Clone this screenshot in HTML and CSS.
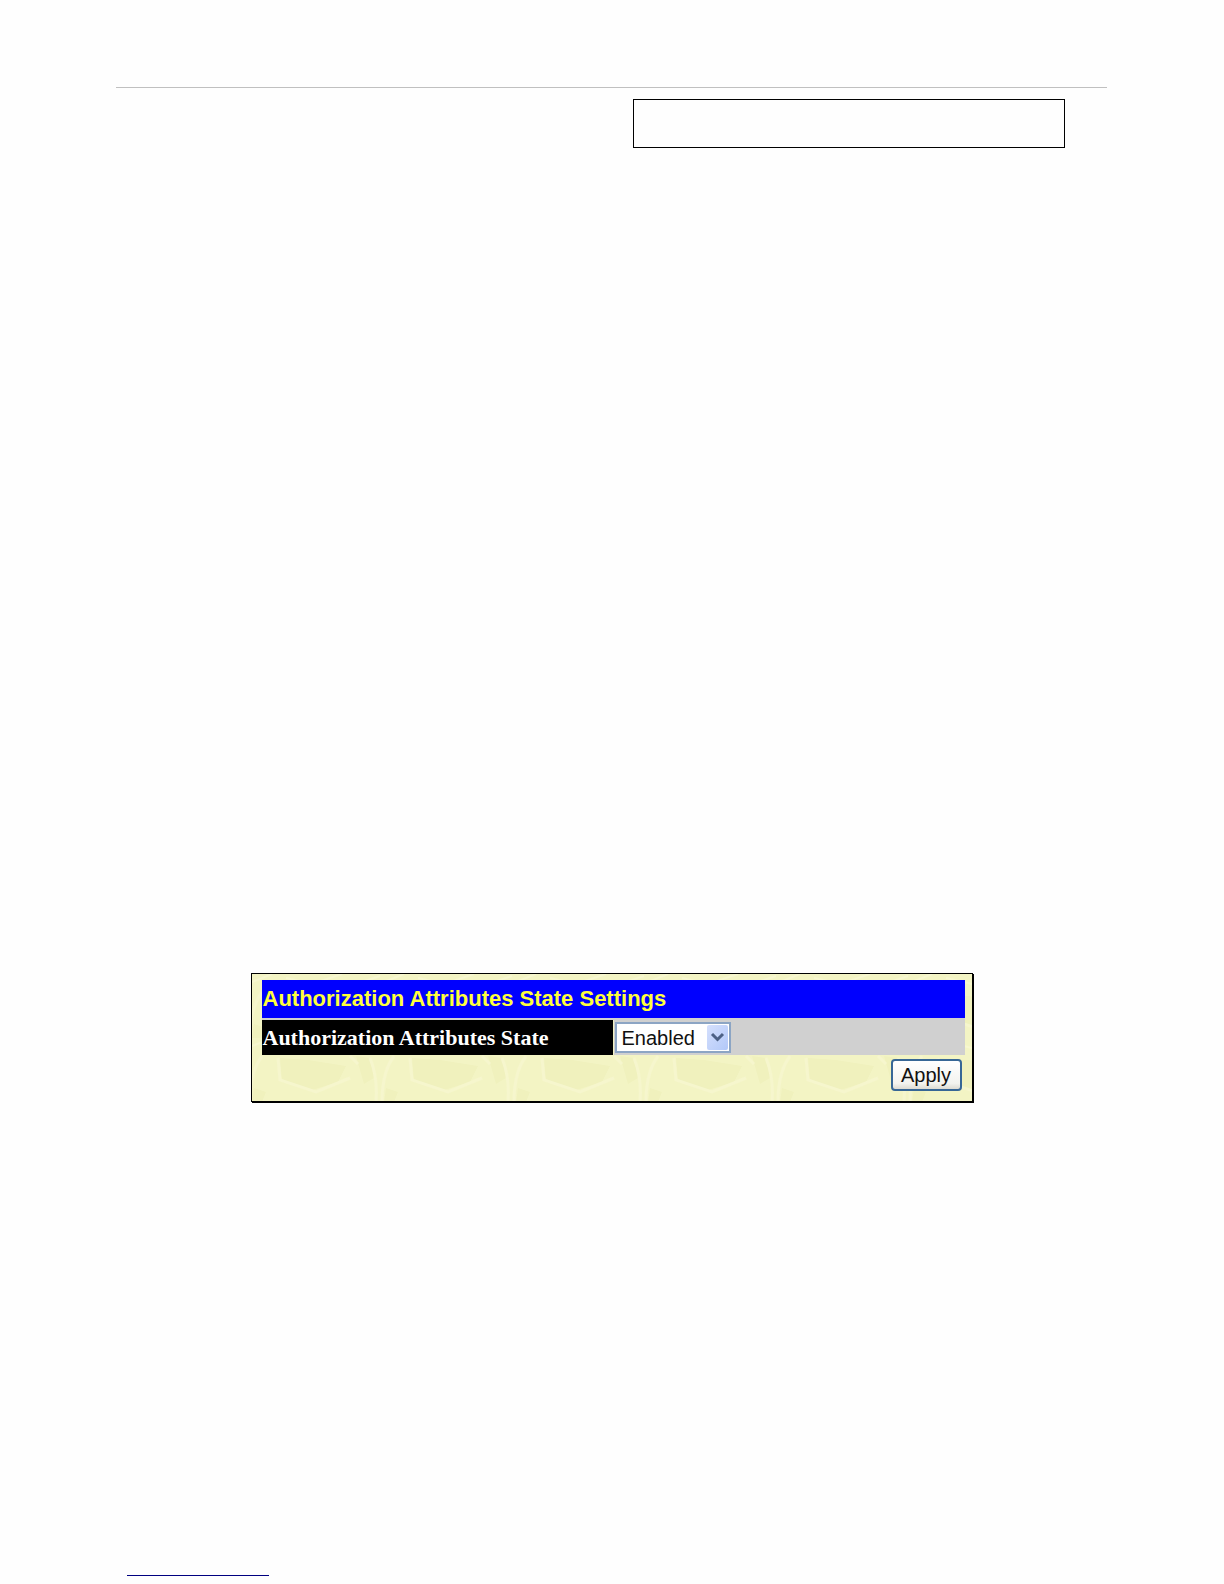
FILE: index.html
```html
<!DOCTYPE html>
<html lang="en">
<head>
  <meta charset="UTF-8" />
  <meta name="viewport" content="width=device-width, initial-scale=1.0"/>
  <title>Authorization Attributes State Settings</title>
  <link rel="stylesheet" href="styles.css">
</head>
<body>

  <header>
    <div class="note"></div>
  </header>

  <main>
    <form class="panel">
      <svg class="texture" aria-hidden="true">
        <defs>
          <pattern id="leaves" width="132" height="64" patternUnits="userSpaceOnUse">
            <path d="M28 20 L56 22 L94 28 L86 44 L60 52 L30 44Z M104 18 L118 20 L122 40 L112 46Z M2 50 L14 54 L10 64 L0 64Z" fill="#f0f1bd"/>
            <path d="M26 20 L28 42 L64 54 L98 40 M98 18 L106 26 M118 20 Q126 40 124 64 M142 18 Q130 34 130 64 M10 18 Q-2 34 -2 64" fill="none" stroke="#f6f6cd" stroke-width="3"/>
            <path d="M34 4 L60 10 L90 0 M0 8 L20 0 M104 10 L128 2" fill="none" stroke="#f7f7d0" stroke-width="2"/>
          </pattern>
        </defs>
        <rect width="100%" height="100%" fill="url(#leaves)"/>
      </svg>
      <table>
        <thead>
          <tr>
            <th class="title" colspan="2">Authorization Attributes State Settings</th>
          </tr>
        </thead>
        <tbody>
          <tr>
            <th class="name" scope="row"><label for="state">Authorization Attributes State</label></th>
            <td>
              <div class="dropdown">
                <select id="state">
                  <option>Enabled</option>
                  <option>Disabled</option>
                </select>
                <svg class="arrow" viewBox="0 0 21 25" aria-hidden="true">
                  <defs>
                    <linearGradient id="blue" x1="0" y1="0" x2="1" y2="1">
                      <stop offset="0" stop-color="#d5e0fd"/>
                      <stop offset="1" stop-color="#b2c8f8"/>
                    </linearGradient>
                  </defs>
                  <rect width="21" height="25" rx="2" fill="url(#blue)"/>
                  <path d="M5 9 L10.5 14.5 L16 9" fill="none" stroke="#4d6185" stroke-width="3"/>
                </svg>
              </div>
            </td>
          </tr>
        </tbody>
      </table>
      <div class="actions">
        <button type="button">Apply</button>
      </div>
    </form>
  </main>

  <footer>
    <div class="link-line"></div>
  </footer>

</body>
</html>
```

FILE: styles.css
```css
* { box-sizing: border-box; }

body {
  margin: 0;
  padding: 87px 117px 8px 116px;
  font-family: "Liberation Sans", Arial, sans-serif;
  background: #fefefe;
  display: flex;
  flex-direction: column;
  min-height: 100vh;
}

header {
  border-top: 1px solid #c0c0c0;
  padding: 11px 42px 0 0;
  display: flex;
  justify-content: flex-end;
}

.note {
  width: 432px;
  min-height: 49px;
  border: 1px solid #000;
}

main {
  flex: 1;
  padding-top: 825px;
}

.panel {
  position: relative;
  max-width: 722px;
  margin: 0 auto;
  padding: 6px 7px 10px 10px;
  background: #f3f4c4;
  border: 1px solid #000;
  box-shadow: 1px 1px 0 #000;
}

.texture {
  position: absolute;
  inset: 0;
  width: 100%;
  height: 100%;
}

.panel table {
  position: relative;
  width: 100%;
  table-layout: fixed;
  border-collapse: collapse;
}

.panel th, .panel td {
  padding: 0;
  text-align: left;
  font-size: 22px;
}

.panel .title {
  height: 39px;
  padding-left: 1px;
  background: #0000fe;
  color: #ffff3c;
  border-bottom: 2px solid #d0d0d0;
}

.panel .name {
  height: 36px;
  padding-left: 1px;
  background: #000;
  color: #fff;
  font-family: "Liberation Serif", "Times New Roman", serif;
}

.panel td {
  padding-left: 1px;
  background: #d0d0d0;
  border-left: 1px solid #f2f3c3;
}

.dropdown {
  position: relative;
  width: 116px;
}

.dropdown select {
  display: block;
  appearance: none;
  width: 100%;
  height: 31px;
  padding: 0 0 0 5px;
  border: 2px solid #8ca5c4;
  border-radius: 0;
  background: #fff;
  color: #111;
  font-family: inherit;
  font-size: 20px;
}

.arrow {
  position: absolute;
  top: 3px;
  right: 3px;
  width: 21px;
  height: 25px;
  pointer-events: none;
}

.actions {
  position: relative;
  display: flex;
  justify-content: flex-end;
  padding: 4px 3px 0 0;
}

.actions button {
  width: 71px;
  height: 32px;
  padding: 0;
  border: 2px solid #376796;
  border-radius: 4px;
  background: linear-gradient(#fff, #f3f3ef 80%, #dcdad2);
  color: #111;
  font-family: inherit;
  font-size: 20px;
}

.link-line {
  width: 142px;
  margin-left: 11px;
  border-bottom: 1px solid #000080;
}
```
